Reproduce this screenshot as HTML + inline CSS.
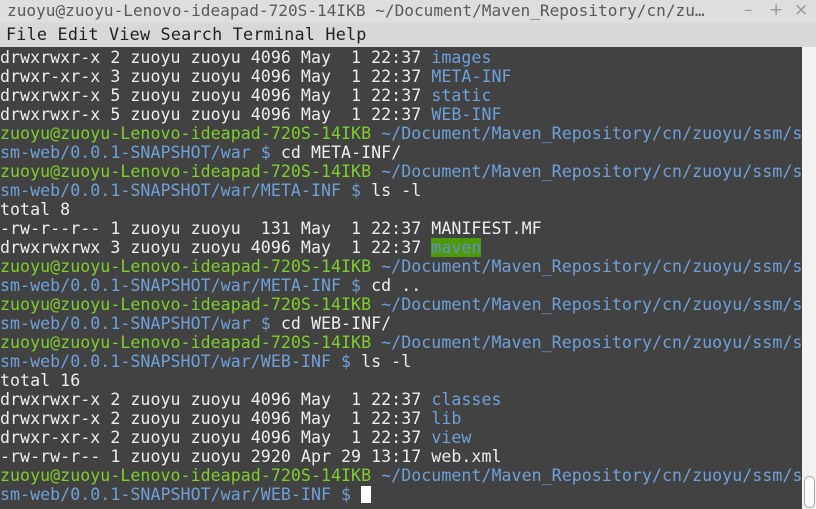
<!DOCTYPE html>
<html><head><meta charset="utf-8"><style>
html,body{margin:0;padding:0;width:816px;height:509px;overflow:hidden;background:#dcdcdc}
.title{position:absolute;left:0;top:0;width:816px;height:23px;background:#dedede;font:16.1px "DejaVu Sans Mono","Liberation Mono",monospace;color:#5a5a5a;}
.title span{position:absolute;left:7px;top:1px;white-space:nowrap}
.ctl{position:absolute;top:0;font:17px "DejaVu Sans",sans-serif;color:#999}
.menu{position:absolute;left:0;top:23px;width:816px;height:24px;background:#d8d8d8;font:16.8px "DejaVu Sans Mono","Liberation Mono",monospace;letter-spacing:0.2px;color:#222}
.menu span{position:absolute;top:1px;white-space:pre}
.term{position:absolute;left:0;top:47px;width:802px;height:462px;background:#424242}
pre{margin:0;position:absolute;left:0;top:1px;font:16.6px/19px "DejaVu Sans Mono","Liberation Mono",monospace;letter-spacing:0.04px;color:#eeeeec;white-space:pre}
.g{color:#7fcf2b}.b{color:#6fa0d8}.p{color:#6fa0d8}.hl{background:#4e9a06;color:#5f8fd0}
.sb{position:absolute;left:802px;top:47px;width:14px;height:462px;background:#f2f2f2}
.th{position:absolute;left:804px;top:476px;width:9px;height:30px;border:1px solid #aaa;border-radius:5px;background:#fafafa}
.cur{display:inline-block;width:10px;height:17px;background:#fff;vertical-align:-3px}
</style></head><body>
<div class="title"><span>zuoyu@zuoyu-Lenovo-ideapad-720S-14IKB ~/Document/Maven_Repository/cn/zu…</span>
<div class="ctl" style="left:744px">–</div><div class="ctl" style="left:769px">+</div><div class="ctl" style="left:794px">×</div></div>
<div class="menu"><span style="left:6px">File Edit View Search Terminal Help</span></div>
<div class="term"><pre>drwxrwxr-x 2 zuoyu zuoyu 4096 May  1 22:37 <span class="b">images</span>
drwxr-xr-x 3 zuoyu zuoyu 4096 May  1 22:37 <span class="b">META-INF</span>
drwxrwxr-x 5 zuoyu zuoyu 4096 May  1 22:37 <span class="b">static</span>
drwxrwxr-x 5 zuoyu zuoyu 4096 May  1 22:37 <span class="b">WEB-INF</span>
<span class="g">zuoyu@zuoyu-Lenovo-ideapad-720S-14IKB</span> <span class="p">~/Document/Maven_Repository/cn/zuoyu/ssm/s</span>
<span class="p">sm-web/0.0.1-SNAPSHOT/war $</span> cd META-INF/
<span class="g">zuoyu@zuoyu-Lenovo-ideapad-720S-14IKB</span> <span class="p">~/Document/Maven_Repository/cn/zuoyu/ssm/s</span>
<span class="p">sm-web/0.0.1-SNAPSHOT/war/META-INF $</span> ls -l
total 8
-rw-r--r-- 1 zuoyu zuoyu  131 May  1 22:37 MANIFEST.MF
drwxrwxrwx 3 zuoyu zuoyu 4096 May  1 22:37 <span class="hl">maven</span>
<span class="g">zuoyu@zuoyu-Lenovo-ideapad-720S-14IKB</span> <span class="p">~/Document/Maven_Repository/cn/zuoyu/ssm/s</span>
<span class="p">sm-web/0.0.1-SNAPSHOT/war/META-INF $</span> cd ..
<span class="g">zuoyu@zuoyu-Lenovo-ideapad-720S-14IKB</span> <span class="p">~/Document/Maven_Repository/cn/zuoyu/ssm/s</span>
<span class="p">sm-web/0.0.1-SNAPSHOT/war $</span> cd WEB-INF/
<span class="g">zuoyu@zuoyu-Lenovo-ideapad-720S-14IKB</span> <span class="p">~/Document/Maven_Repository/cn/zuoyu/ssm/s</span>
<span class="p">sm-web/0.0.1-SNAPSHOT/war/WEB-INF $</span> ls -l
total 16
drwxrwxr-x 2 zuoyu zuoyu 4096 May  1 22:37 <span class="b">classes</span>
drwxrwxr-x 2 zuoyu zuoyu 4096 May  1 22:37 <span class="b">lib</span>
drwxr-xr-x 2 zuoyu zuoyu 4096 May  1 22:37 <span class="b">view</span>
-rw-rw-r-- 1 zuoyu zuoyu 2920 Apr 29 13:17 web.xml
<span class="g">zuoyu@zuoyu-Lenovo-ideapad-720S-14IKB</span> <span class="p">~/Document/Maven_Repository/cn/zuoyu/ssm/s</span>
<span class="p">sm-web/0.0.1-SNAPSHOT/war/WEB-INF $</span> <span class="cur"></span></pre></div>
<div class="sb"></div><div class="th"></div>
</body></html>
